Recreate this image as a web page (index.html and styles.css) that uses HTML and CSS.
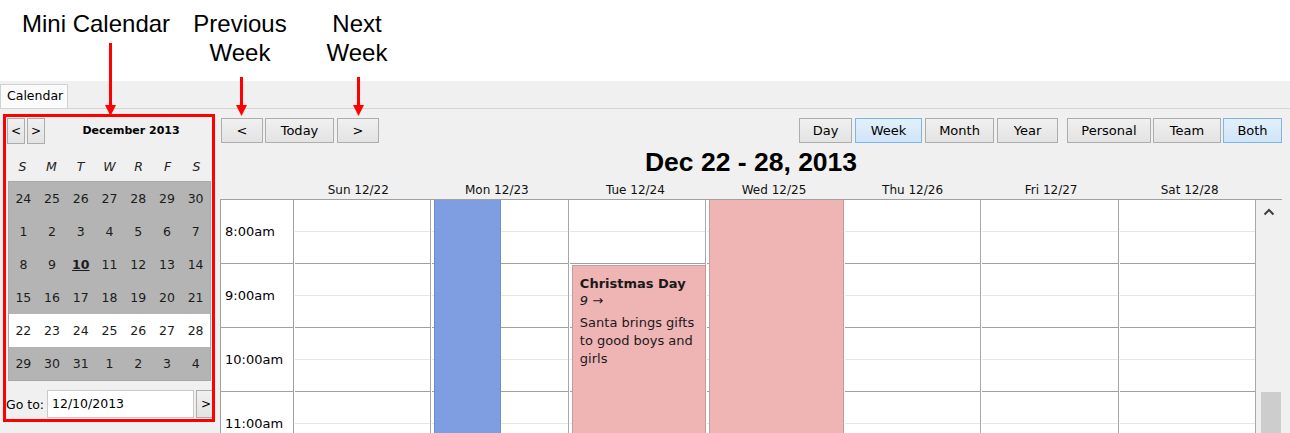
FILE: index.html
```html
<!DOCTYPE html>
<html>
<head>
<meta charset="utf-8">
<title>Calendar</title>
<link rel="stylesheet" href="styles.css">
</head>
<body>
<div class="annot">
  <div class="note note-mini">Mini Calendar</div>
  <div class="note note-prev">Previous<br>Week</div>
  <div class="note note-next">Next<br>Week</div>
</div>

<div class="app">
  <div class="tabs"><div class="tab">Calendar</div></div>
  <div class="content">
    <aside class="mini">
      <div class="mini-head">
        <div class="btn mini-nav">&lt;</div>
        <div class="btn mini-nav">&gt;</div>
        <div class="mini-title">December 2013</div>
      </div>
      <div class="mini-dow">
        <span>S</span><span>M</span><span>T</span><span>W</span><span>R</span><span>F</span><span>S</span>
      </div>
      <div class="mini-grid">
        <span>24</span><span>25</span><span>26</span><span>27</span><span>28</span><span>29</span><span>30</span>
        <span>1</span><span>2</span><span>3</span><span>4</span><span>5</span><span>6</span><span>7</span>
        <span>8</span><span>9</span><span class="today">10</span><span>11</span><span>12</span><span>13</span><span>14</span>
        <span>15</span><span>16</span><span>17</span><span>18</span><span>19</span><span>20</span><span>21</span>
        <span class="cur">22</span><span class="cur">23</span><span class="cur">24</span><span class="cur">25</span><span class="cur">26</span><span class="cur">27</span><span class="cur">28</span>
        <span>29</span><span>30</span><span>31</span><span>1</span><span>2</span><span>3</span><span>4</span>
      </div>
      <div class="goto">
        <span class="goto-label">Go to:</span>
        <div class="goto-input">12/10/2013</div>
        <div class="btn goto-btn">&gt;</div>
      </div>
    </aside>

    <main class="main">
      <div class="toolbar">
        <div class="group nav-group">
          <div class="btn w-prev">&lt;</div>
          <div class="btn w-today">Today</div>
          <div class="btn w-next">&gt;</div>
        </div>
        <div class="group view-group">
          <div class="btn w-day">Day</div>
          <div class="btn w-week selected">Week</div>
          <div class="btn w-month">Month</div>
          <div class="btn w-year">Year</div>
        </div>
        <div class="group src-group">
          <div class="btn w-personal">Personal</div>
          <div class="btn w-team">Team</div>
          <div class="btn w-both selected">Both</div>
        </div>
      </div>
      <div class="title">Dec 22 - 28, 2013</div>
      <div class="header">
        <div class="hdr-spacer"></div>
        <div class="hdr-days">
          <span>Sun 12/22</span><span>Mon 12/23</span><span>Tue 12/24</span><span>Wed 12/25</span><span>Thu 12/26</span><span>Fri 12/27</span><span>Sat 12/28</span>
        </div>
      </div>
      <div class="grid">
        <div class="timecol">
          <div class="hour">8:00am</div>
          <div class="hour">9:00am</div>
          <div class="hour">10:00am</div>
          <div class="hour">11:00am</div>
        </div>
        <div class="days">
          <div class="day">
            <div class="slot"></div><div class="slot hr"></div><div class="slot"></div><div class="slot hr"></div><div class="slot"></div><div class="slot hr"></div><div class="slot"></div><div class="slot hr"></div>
          </div>
          <div class="day">
            <div class="slot"></div><div class="slot hr"></div><div class="slot"></div><div class="slot hr"></div><div class="slot"></div><div class="slot hr"></div><div class="slot"></div><div class="slot hr"></div>
            <div class="event ev-blue"></div>
          </div>
          <div class="day">
            <div class="slot"></div><div class="slot hr"></div><div class="slot"></div><div class="slot hr"></div><div class="slot"></div><div class="slot hr"></div><div class="slot"></div><div class="slot hr"></div>
            <div class="event ev-pink ev-xmas">
              <div class="ev-title">Christmas Day</div>
              <div class="ev-time">9 →</div>
              <div class="ev-desc">Santa brings gifts<br>to good boys and<br>girls</div>
            </div>
          </div>
          <div class="day">
            <div class="slot"></div><div class="slot hr"></div><div class="slot"></div><div class="slot hr"></div><div class="slot"></div><div class="slot hr"></div><div class="slot"></div><div class="slot hr"></div>
            <div class="event ev-pink ev-allday"></div>
          </div>
          <div class="day">
            <div class="slot"></div><div class="slot hr"></div><div class="slot"></div><div class="slot hr"></div><div class="slot"></div><div class="slot hr"></div><div class="slot"></div><div class="slot hr"></div>
          </div>
          <div class="day">
            <div class="slot"></div><div class="slot hr"></div><div class="slot"></div><div class="slot hr"></div><div class="slot"></div><div class="slot hr"></div><div class="slot"></div><div class="slot hr"></div>
          </div>
          <div class="day">
            <div class="slot"></div><div class="slot hr"></div><div class="slot"></div><div class="slot hr"></div><div class="slot"></div><div class="slot hr"></div><div class="slot"></div><div class="slot hr"></div>
          </div>
        </div>
        <div class="scrollbar">
          <div class="sb-up">
            <svg width="12" height="8" viewBox="0 0 12 8"><polyline points="1.5,6.5 6,2 10.5,6.5" fill="none" stroke="#404040" stroke-width="2"/></svg>
          </div>
          <div class="sb-track"><div class="sb-thumb"></div></div>
        </div>
      </div>
    </main>
  </div>
</div>

<div class="overlay">
  <svg class="arrow arrow-mini" width="13" height="73" viewBox="0 0 13 73"><line x1="6.5" y1="0" x2="6.5" y2="64" stroke="#ff0000" stroke-width="3"/><polygon points="1,62 12,62 6.5,73" fill="#ff0000"/></svg>
  <svg class="arrow arrow-prev" width="13" height="39" viewBox="0 0 13 39"><line x1="6.5" y1="0" x2="6.5" y2="30" stroke="#ff0000" stroke-width="3"/><polygon points="1,28 12,28 6.5,39" fill="#ff0000"/></svg>
  <svg class="arrow arrow-next" width="13" height="39" viewBox="0 0 13 39"><line x1="6.5" y1="0" x2="6.5" y2="30" stroke="#ff0000" stroke-width="3"/><polygon points="1,28 12,28 6.5,39" fill="#ff0000"/></svg>
</div>
</body>
</html>
```

FILE: styles.css
```css
* { box-sizing: border-box; margin: 0; padding: 0; }

html, body {
  width: 1290px;
  height: 433px;
  overflow: hidden;
  background: #ffffff;
}

body {
  position: relative;
  font-family: "DejaVu Sans", "Liberation Sans", sans-serif;
  font-size: 12px;
  color: #000;
}

/* ---------- annotations ---------- */
.annot {
  height: 81px;
  position: relative;
  font-family: "Liberation Sans", Arial, sans-serif;
  font-size: 24px;
  line-height: 29px;
  color: #000;
}
.note { position: absolute; top: 9px; text-align: center; white-space: nowrap; }
.note-mini { left: 22px; }
.note-prev { left: 190px; width: 100px; }
.note-next { left: 307px; width: 100px; }

.overlay {
  position: absolute;
  left: 0; top: 0;
  width: 1290px; height: 433px;
  pointer-events: none;
}
.arrow { position: absolute; display: block; }
.arrow-mini { left: 104px; top: 43px; }
.arrow-prev { left: 235px; top: 77px; }
.arrow-next { left: 352px; top: 77px; }

/* ---------- app ---------- */
.app { height: 352px; background: #f0f0f0; }

.tabs {
  height: 28px;
  padding-top: 3px;
  border-bottom: 1px solid #d4d4d4;
  display: flex;
}
.tab {
  height: 24px;
  padding: 0 6px;
  width: 68px;
  border: 1px solid #d0d0d0;
  border-bottom: none;
  background: #fbfbfb;
  line-height: 22px;
  font-size: 12.5px;
}

.content { display: flex; padding-top: 5px; height: 324px; }

/* ---------- buttons ---------- */
.btn {
  height: 25px;
  border: 1px solid #adadad;
  background: linear-gradient(#f0f0f0, #e3e3e3);
  text-align: center;
  line-height: 23px;
  color: #000;
  font-size: 13px;
}
.btn.selected {
  background: linear-gradient(#e3f0fb, #cfe5f8);
  border-color: #7eb4ea;
}

/* ---------- mini calendar ---------- */
.mini {
  margin-left: 3px;
  width: 212px;
  height: 308px;
  border: 3px solid #ff0000;
  overflow: hidden;
}
.mini-head {
  display: flex;
  align-items: flex-start;
  gap: 2px;
  height: 27px;
  padding: 1px 0 0 1px;
}
.mini-nav { width: 18px; height: 26px; line-height: 24px; font-size: 12px; }
.mini-title {
  flex: 1;
  text-align: center;
  padding-left: 3px;
  font-weight: bold;
  font-size: 11px;
  line-height: 26px;
}
.mini-dow {
  display: grid;
  grid-template-columns: repeat(7, 29px);
  margin-left: 2px;
  height: 37px;
  padding-top: 7px;
  align-items: center;
  font-style: italic;
  font-size: 12.5px;
  color: #222;
}
.mini-dow span, .mini-grid span { text-align: center; }
.mini-grid {
  margin-left: 2px;
  width: 203px;
  height: 200px;
  display: grid;
  grid-template-columns: repeat(7, 1fr);
  grid-template-rows: repeat(6, 1fr);
  background: #b4b4b4;
  border: 1px solid #a8a8a8;
  color: #1c1c1c;
  font-size: 12.5px;
}
.mini-grid span { display: flex; align-items: center; justify-content: center; }
.mini-grid .cur { background: #ffffff; }
.mini-grid .today { font-weight: bold; text-decoration: underline; }

.goto {
  display: flex;
  align-items: center;
  height: 28px;
  margin-top: 9px;
  font-size: 12.5px;
  white-space: nowrap;
}
.goto-label { width: 40px; flex-shrink: 0; }
.goto-input {
  flex-shrink: 0;
  margin-left: 1px;
  width: 147px;
  height: 28px;
  background: #fff;
  border: 1px solid #c9c9c9;
  line-height: 26px;
  padding-left: 4px;
}
.goto-btn {
  flex-shrink: 0;
  margin-left: 2px;
  width: 20px;
  height: 28px;
  line-height: 26px;
  text-align: left;
  padding-left: 4px;
  font-size: 12px;
}

/* ---------- main ---------- */
.main {
  margin-left: 5px;
  width: 1062px;
  height: 319px;
  padding-top: 4px;
  display: flex;
  flex-direction: column;
  overflow: hidden;
}

.toolbar { display: flex; height: 25px; flex-shrink: 0; }
.group { display: flex; }
.nav-group { margin-left: 1px; gap: 2px; }
.view-group { margin-left: auto; gap: 3px; }
.src-group { margin-left: 9px; gap: 2px; }
.w-prev { width: 42px; }
.w-today { width: 69px; }
.w-next { width: 42px; margin-left: 1px; }
.w-day { width: 53px; }
.w-week { width: 67px; }
.w-month { width: 69px; }
.w-year { width: 61px; }
.w-personal { width: 84px; }
.w-team { width: 68px; }
.w-both { width: 59px; }

.title {
  height: 38px;
  flex-shrink: 0;
  line-height: 38px;
  text-align: center;
  font-family: "Liberation Sans", Arial, sans-serif;
  font-weight: bold;
  font-size: 26.5px;
}

.header { display: flex; height: 18px; flex-shrink: 0; line-height: 18px; }
.hdr-spacer { width: 69px; }
.hdr-days {
  width: 970px;
  display: grid;
  grid-template-columns: repeat(7, 1fr);
  text-align: center;
  color: #111;
}

.grid {
  flex: 1;
  display: flex;
  border-top: 1px solid #a0a0a0;
  overflow: hidden;
}

.timecol {
  width: 74px;
  flex-shrink: 0;
  background: #fff;
  border-left: 1px solid #a0a0a0;
  border-right: 1px solid #a0a0a0;
  font-size: 13px;
}
.hour {
  height: 64px;
  flex-shrink: 0;
  border-bottom: 1px solid #a0a0a0;
  display: flex;
  align-items: center;
  padding-left: 4px;
}

.days { flex: 1; display: flex; background: #fff; }
.day {
  flex: 1;
  position: relative;
  padding-left: 1px;
  border-right: 1px solid #a8a8a8;
}
.slot { height: 32px; border-bottom: 1px solid #e6e6e6; }
.slot.hr { border-bottom-color: #a0a0a0; }

.event { position: absolute; }
.ev-blue {
  left: 3px; width: 67px; top: -1px; bottom: -20px;
  background: #7f9ee1;
  border: 1px solid #6c8bd2;
}
.ev-pink {
  background: #efb4b4;
  border: 1px solid #c99a9a;
  color: #1a1a1a;
}
.ev-xmas {
  left: 3px; right: -1px; top: 65px; bottom: -20px;
  padding: 9px 0 0 7px;
  font-size: 13px;
}
.ev-allday { left: 3px; right: -1px; top: -1px; bottom: -20px; }
.ev-title { font-weight: bold; line-height: 17px; }
.ev-time { font-style: italic; line-height: 18px; }
.ev-desc { margin-top: 4px; line-height: 18px; }

.scrollbar {
  width: 26px;
  flex-shrink: 0;
  background: #f0f0f0;
  display: flex;
  flex-direction: column;
}
.sb-up {
  height: 26px;
  flex-shrink: 0;
  display: flex;
  justify-content: center;
  padding-top: 8px;
}
.sb-up svg { display: block; }
.sb-track { flex: 1; padding-top: 166px; }
.sb-thumb { margin-left: 5px; width: 20px; height: 100px; background: #cdcdcd; }
```
